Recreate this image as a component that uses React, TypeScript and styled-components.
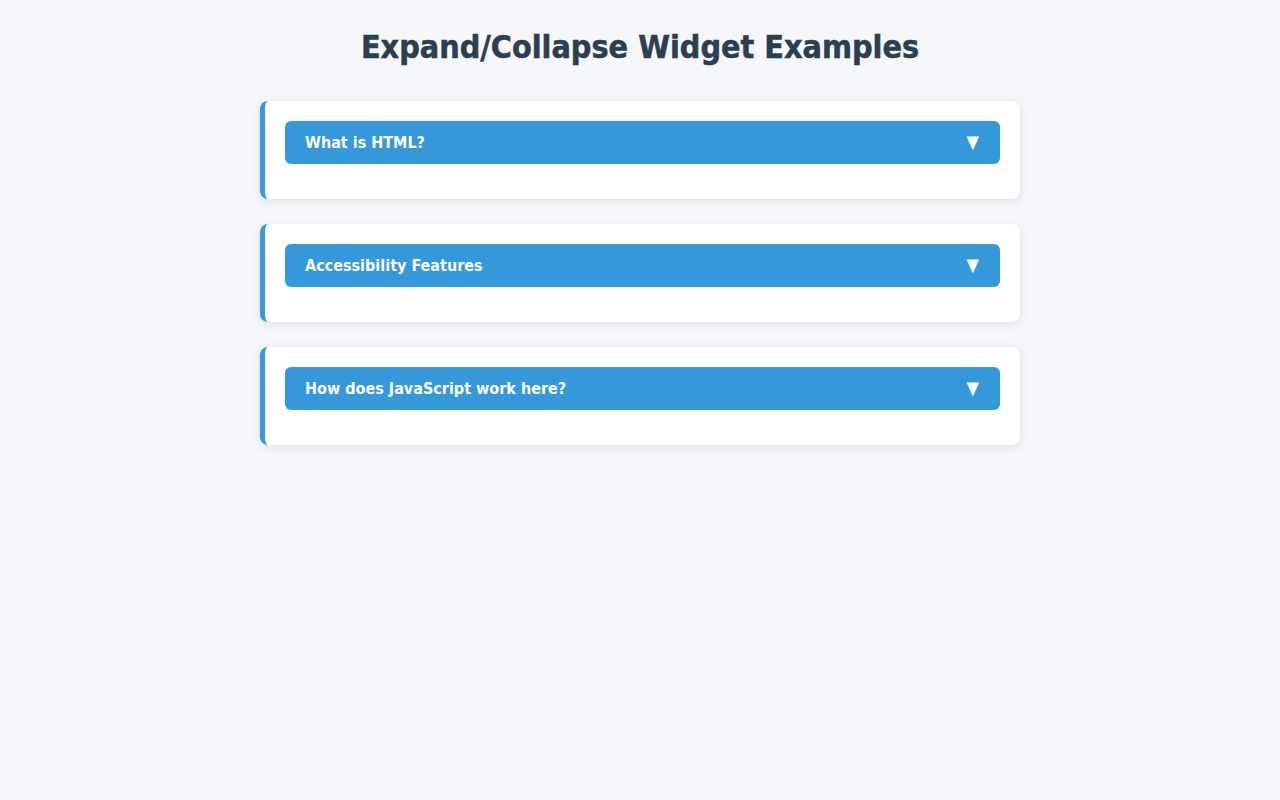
import React, { useState } from "react";
import styled, { createGlobalStyle } from "styled-components";

const GlobalStyle = createGlobalStyle`
  html, body {
    margin: 0;
    padding: 0;
    background: #f5f7fa;
  }
  body {
    font-family: "DejaVu Sans Condensed", "DejaVu Sans", sans-serif;
    color: #333;
  }
`;

interface Item {
  title: string;
  body: string;
}

const items: Item[] = [
  {
    title: "What is HTML?",
    body: "HTML is the standard markup language for creating web pages.",
  },
  {
    title: "Accessibility Features",
    body: "These widgets use ARIA attributes so screen readers announce their state.",
  },
  {
    title: "How does JavaScript work here?",
    body: "A small script toggles the aria-expanded attribute and the panel visibility.",
  },
];

const Widget = ({ title, body }: Item) => {
  const [open, setOpen] = useState(false);
  return (
    <Card>
      <Toggle aria-expanded={open} onClick={() => setOpen(!open)}>
        <span>{title}</span>
        <Arrow $open={open}>▼</Arrow>
      </Toggle>
      <Panel $open={open}>{body}</Panel>
    </Card>
  );
};

export default function App() {
  return (
    <>
      <GlobalStyle />
      <Page>
        <Heading>Expand/Collapse Widget Examples</Heading>
        {items.map((item) => (
          <Widget key={item.title} {...item} />
        ))}
      </Page>
    </>
  );
}

const Page = styled.main`
  max-width: 760px;
  margin: 0 auto;
  padding: 28px 0 20px;
`;

const Heading = styled.h1`
  margin: 0 0 35px;
  text-align: center;
  font-size: 32px;
  line-height: 38px;
  font-weight: bold;
  color: #2c3e50;
  -webkit-text-stroke: 0.5px #2c3e50;
`;

const Card = styled.section`
  background: #fff;
  border-left: 5px solid #3498db;
  border-radius: 8px;
  box-shadow: 0 2px 10px rgba(0, 0, 0, 0.1);
  padding: 20px 20px 35px;
  margin-bottom: 25px;
`;

const Toggle = styled.button`
  display: flex;
  justify-content: space-between;
  align-items: center;
  width: 100%;
  box-sizing: border-box;
  padding: 12px 20px;
  border: none;
  border-radius: 6px;
  background: #3498db;
  color: #fff;
  font-family: inherit;
  font-size: 16px;
  line-height: 19px;
  font-weight: bold;
  text-align: left;
  cursor: pointer;
`;

const Arrow = styled.span<{ $open: boolean }>`
  font-size: 18px;
  line-height: 19px;
  margin-top: -3px;
  margin-right: 1px;
  transform: rotate(${(p) => (p.$open ? "180deg" : "0deg")});
  transition: transform 0.2s;
`;

const Panel = styled.div<{ $open: boolean }>`
  display: ${(p) => (p.$open ? "block" : "none")};
  padding-top: 15px;
  font-size: 15px;
  line-height: 1.5;
`;
